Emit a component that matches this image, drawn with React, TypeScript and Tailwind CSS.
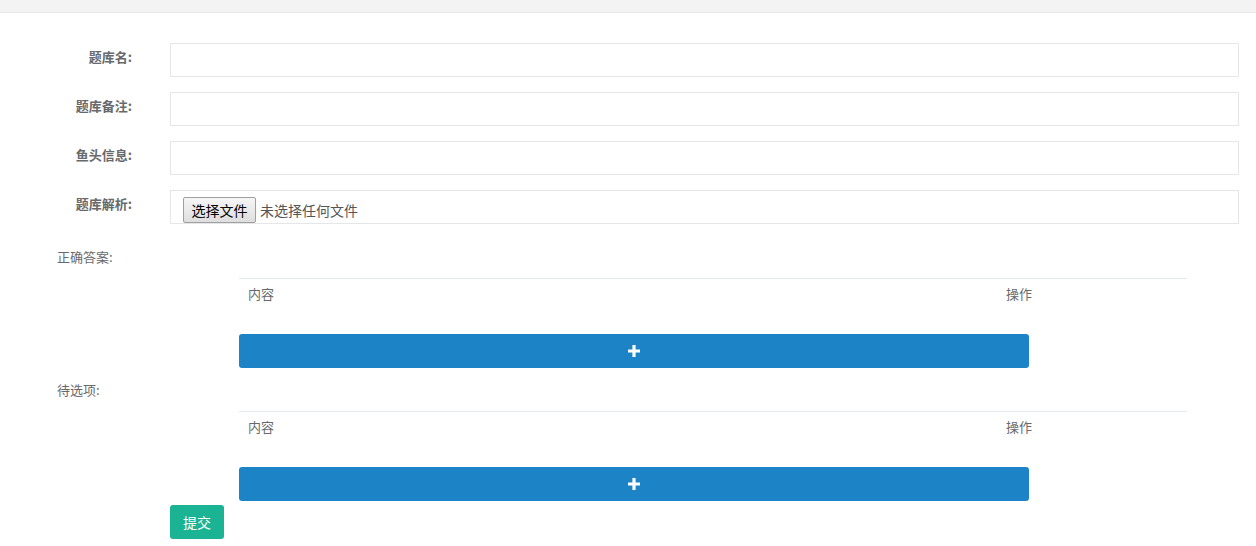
import React from "react";

const font = { fontFamily: '"Noto Sans CJK SC", "Open Sans", "Liberation Sans", sans-serif' };

function FieldRow({ label, children }: { label: string; children: React.ReactNode }) {
  return (
    <div className="flex items-start mb-[15px]">
      <label className="w-[132px] shrink-0 text-right pt-[5px] leading-[18px] text-[13px] font-bold text-[#676a6c]">
        {label}
      </label>
      <div className="ml-[38px] w-[1069px]">{children}</div>
    </div>
  );
}

function TextBox() {
  return <input type="text" className="block w-full h-[34px] border border-[#e5e6e7] bg-white outline-none" />;
}

function PlusIcon() {
  return (
    <svg width="14" height="14" viewBox="0 0 14 14" aria-hidden="true">
      <path d="M7 1v12M1 7h12" stroke="white" strokeWidth="3.2" strokeLinecap="butt" />
    </svg>
  );
}

function ItemTable({ label, top }: { label: string; top: string }) {
  return (
    <div className={top}>
      <div className="pl-[57px] leading-[18px] text-[13px] text-[#676a6c]">{label}</div>
      <div className="ml-[239px] w-[948px] mt-[12px] border-t border-[#e7eaec] flex text-[13px] text-[#676a6c] leading-[18px]">
        <div className="w-[759px] px-[9px] pt-[6px] pb-[10px]">内容</div>
        <div className="px-[8px] pt-[6px] pb-[10px]">操作</div>
      </div>
      <button className="ml-[239px] mt-[21px] w-[790px] h-[34px] rounded-[3px] bg-[#1c84c6] flex items-center justify-center">
        <PlusIcon />
      </button>
    </div>
  );
}

export default function App() {
  return (
    <div className="w-[1256px] h-[546px] bg-white overflow-hidden" style={font}>
      <div className="h-[13px] bg-[#f3f3f4] border-b border-[#e7e7e7]" />
      <div className="pt-[30px]">
        <FieldRow label="题库名:">
          <TextBox />
        </FieldRow>
        <FieldRow label="题库备注:">
          <TextBox />
        </FieldRow>
        <FieldRow label="鱼头信息:">
          <TextBox />
        </FieldRow>
        <FieldRow label="题库解析:">
          <div className="h-[34px] border border-[#e5e6e7] pl-[12px] pt-[6px] flex items-start">
            <span className="h-[26px] w-[73px] flex items-center justify-center text-[14px] text-black border border-[#a0a0a0] rounded-[2px] bg-gradient-to-b from-[#f6f6f6] to-[#dedede]">
              选择文件
            </span>
            <span className="ml-[4px] h-[26px] flex items-center text-[14px] text-[#555]">未选择任何文件</span>
          </div>
        </FieldRow>
        <ItemTable label="正确答案:" top="mt-[24px]" />
        <ItemTable label="待选项:" top="mt-[13px]" />
        <button className="ml-[170px] mt-[4px] w-[54px] h-[34px] rounded-[3px] bg-[#1ab394] text-white text-[14px]">
          提交
        </button>
      </div>
    </div>
  );
}
